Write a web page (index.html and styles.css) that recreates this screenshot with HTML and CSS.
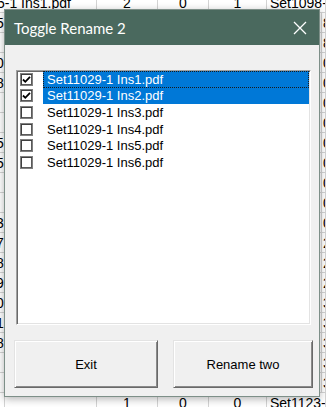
FILE: index.html
```html
<!DOCTYPE html>
<html lang="en">
<head>
    <meta charset="UTF-8">
    <title>Toggle Rename 2</title>
    <link rel="stylesheet" href="styles.css">
</head>
<body>
    <!-- Лист Excel за окном -->
    <div class="sheet" id="sheet"></div>

    <!-- Диалог -->
    <div class="dialog">
        <div class="title-bar">
            <span class="title">Toggle Rename 2</span>
            <svg class="close-x" width="14" height="14" viewBox="0 0 14 14">
                <path d="M1 1 L13 13 M13 1 L1 13" stroke="#fff" stroke-width="1.3" fill="none"/>
            </svg>
        </div>
        <div class="dialog-body">
            <div class="list-box" id="fileList"></div>
            <div class="buttons">
                <button class="btn btn-exit">Exit</button>
                <button class="btn btn-rename">Rename two</button>
            </div>
        </div>
    </div>

    <script>
        // Строки листа: [левая цифра, B, C, D, E, F] (середина закрыта окном)
        const rows = [
            ["", "2", "0", "1", "Set1098-1 Ins1.pdf", ""],
            ["5", "", "", "", "", "8"],
            ["", "", "", "", "", "8"],
            ["0", "", "", "", "", "0"],
            ["8", "", "", "", "", "0"],
            ["", "", "", "", "", "0"],
            ["", "", "", "", "", "0"],
            ["5", "", "", "", "", "0"],
            ["5", "", "", "", "", "0"],
            ["", "", "", "", "", "0"],
            ["", "", "", "", "", "0"],
            ["3", "", "", "", "", "0"],
            ["7", "", "", "", "", "2"],
            ["8", "", "", "", "", "2"],
            ["9", "", "", "", "", "2"],
            ["0", "", "", "", "", "3"],
            ["1", "", "", "", "", "3"],
            ["8", "", "", "", "", "3"],
            ["", "", "", "", "", "3"],
            ["", "", "", "", "", "3"],
            ["", "1", "0", "0", "Set1123-1 Ins1.pdf", ""]
        ];

        const sheet = document.getElementById("sheet");
        rows.forEach((r, i) => {
            const row = document.createElement("div");
            row.className = "sheet-row";
            let html = "";
            if (i === 0) {
                html += '<div class="cell cell-wide cell-spill">5-1 Ins1.pdf</div>';
            } else {
                html += '<div class="cell cell-num">' + r[0] + '</div><div class="cell"></div>';
            }
            html += '<div class="cell cell-mid">' + r[1] + '</div>'
                + '<div class="cell cell-mid">' + r[2] + '</div>'
                + '<div class="cell cell-mid">' + r[3] + '</div>';
            if (r[5] === "") {
                html += '<div class="cell cell-wide">' + r[4] + '</div>';
            } else {
                html += '<div class="cell">' + r[4] + '</div><div class="cell cell-edge">' + r[5] + '</div>';
            }
            row.innerHTML = html;
            sheet.appendChild(row);
        });

        // Список файлов
        const files = [
            { name: "Set11029-1 Ins1.pdf", checked: true, selected: true, focus: true },
            { name: "Set11029-1 Ins2.pdf", checked: true, selected: true },
            { name: "Set11029-1 Ins3.pdf" },
            { name: "Set11029-1 Ins4.pdf" },
            { name: "Set11029-1 Ins5.pdf" },
            { name: "Set11029-1 Ins6.pdf" }
        ];

        const list = document.getElementById("fileList");
        files.forEach(f => {
            const item = document.createElement("div");
            item.className = "list-item";
            const check = f.checked
                ? '<svg width="9" height="9" viewBox="0 0 9 9"><path d="M1 4.5 L3.3 6.8 L8 1.8" stroke="#000" stroke-width="1.8" fill="none"/></svg>'
                : '';
            item.innerHTML = '<span class="check-box">' + check + '</span>'
                + '<span class="item-label' + (f.selected ? ' selected' : '') + (f.focus ? ' focused' : '') + '">' + f.name + '</span>';
            list.appendChild(item);
        });
    </script>
</body>
</html>
```

FILE: styles.css
```css
* {
    margin: 0;
    padding: 0;
    box-sizing: border-box;
}

html, body {
    width: 100%;
    height: 100%;
    overflow: hidden;
    background: #fff;
}

/* Лист */
.sheet {
    margin-top: -7px;
    font-family: 'Liberation Sans', Arial, sans-serif;
    font-size: 14px;
    color: #000;
}

.sheet-row {
    display: grid;
    grid-template-columns: 5px 92px 61px 51px 58px 55px 1fr;
    height: 20px;
}

.cell {
    height: 20px;
    line-height: 20px;
    border-right: 1px solid #d4d4d4;
    border-bottom: 1px solid #d4d4d4;
    white-space: nowrap;
    overflow: hidden;
    padding-left: 3px;
}

.cell-num {
    padding-left: 0;
    text-indent: -4px;
}

.cell-edge {
    padding-left: 1px;
}

.cell-wide {
    grid-column: span 2;
}

.cell-spill {
    padding-left: 0;
    text-indent: -3px;
}

.cell-mid {
    text-align: center;
    padding-left: 0;
}

/* Диалог */
.dialog {
    position: absolute;
    left: 4px;
    top: 9px;
    width: 316px;
    height: 388px;
    border: 1px solid #7d8f88;
    background: #f0f0f0;
    box-shadow: 0 2px 8px rgba(0, 0, 0, 0.3);
    display: flex;
    flex-direction: column;
}

.title-bar {
    height: 35px;
    background: #4a695e;
    display: flex;
    align-items: center;
    justify-content: space-between;
    padding: 0 12px 0 9px;
    flex-shrink: 0;
}

.title {
    font-family: 'Lato', 'Liberation Sans', sans-serif;
    font-size: 15px;
    color: #fff;
}

.dialog-body {
    flex: 1;
}

/* Список */
.list-box {
    margin: 25px 8px 0 11px;
    height: 255px;
    background: #fff;
    border: 1px solid;
    border-color: #a0a0a0 #fff #fff #a0a0a0;
    box-shadow: inset 1px 1px 0 #696969, inset -1px -1px 0 #e3e3e3;
    font-family: 'Liberation Sans', Arial, sans-serif;
    font-size: 13px;
    color: #000;
}

.list-item {
    height: 16.6px;
    display: flex;
    align-items: center;
}

.check-box {
    width: 13px;
    height: 13px;
    margin-left: 3px;
    background: #fff;
    border: 1px solid #808080;
    box-shadow: inset 1px 1px 0 #404040, inset -1px -1px 0 #5a5a5a;
    display: flex;
    justify-content: center;
    align-items: center;
    flex-shrink: 0;
}

.item-label {
    flex: 1;
    height: 100%;
    margin-left: 10px;
    margin-right: 1px;
    padding-left: 4px;
    display: flex;
    align-items: center;
    white-space: nowrap;
}

.item-label.selected {
    background: #0078d7;
    color: #fff;
}

.item-label.focused {
    outline: 1px dotted #1a1a1a;
    outline-offset: -1px;
}

/* Кнопки */
.buttons {
    display: flex;
    gap: 15px;
    margin: 15px 0 0 9px;
}

.btn {
    height: 48px;
    background: #f0f0f0;
    border: 1px solid;
    border-color: #e3e3e3 #696969 #696969 #e3e3e3;
    box-shadow: inset 1px 1px 0 #fff, inset -1px -1px 0 #8a8a8a;
    font-family: 'Liberation Sans', Arial, sans-serif;
    font-size: 13px;
    color: #000;
}

.btn-exit { width: 144px; }
.btn-rename { width: 140px; }
```
